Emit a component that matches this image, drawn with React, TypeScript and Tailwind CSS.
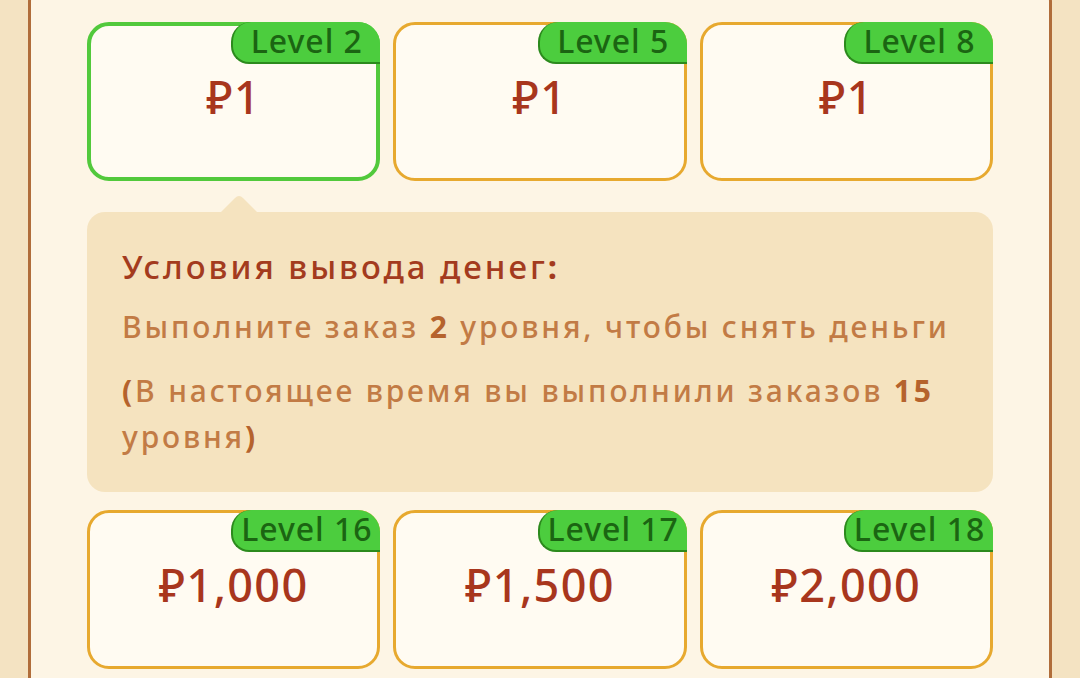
import React from "react";

type Tier = { level: number; amount: string; active?: boolean };

const topRow: Tier[] = [
  { level: 2, amount: "₽1", active: true },
  { level: 5, amount: "₽1" },
  { level: 8, amount: "₽1" },
];

const bottomRow: Tier[] = [
  { level: 16, amount: "₽1,000" },
  { level: 17, amount: "₽1,500" },
  { level: 18, amount: "₽2,000" },
];

const font = { fontFamily: "'Noto Sans', 'Liberation Sans', sans-serif" };

function TierCard({ tier }: { tier: Tier }) {
  return (
    <div
      className={
        "relative h-[159px] rounded-[22px] bg-[#fffbf2] flex items-center justify-center " +
        (tier.active ? "border-[4px] border-[#52c93c]" : "border-[3px] border-[#e7a92f]")
      }
    >
      <div
        className={
          "absolute w-[149px] h-[42px] flex items-center justify-center bg-[#4ccd3e] border-l-2 border-b-2 border-[#2c8a1d] rounded-tl-[20px] rounded-bl-[18px] rounded-tr-[22px] " +
          (tier.active ? "right-[-4px] top-[-4px]" : "right-[-3px] top-[-3px]")
        }
      >
        <span className="text-[32px] font-medium leading-none text-[#1b6512] tracking-[0.03em] pb-[2px]" style={font}>
          Level {tier.level}
        </span>
      </div>
      <span className="text-[45px] font-medium leading-none text-[#a8361d] tracking-[0.03em] mt-[-10px]" style={font}>
        {tier.amount}
      </span>
    </div>
  );
}

export default function App() {
  return (
    <div className="w-[1080px] h-[678px] overflow-hidden bg-[#f4e3c2]" style={font}>
      <div className="mx-[28px] mt-[-22px] h-[730px] bg-[#fdf5e5] border-x-[3px] border-t-[3px] border-[#b06d3a] rounded-t-[24px] px-[56px] pt-[41px]">
        <div className="grid grid-cols-3 gap-x-[13px]">
          {topRow.map((t) => (
            <TierCard key={t.level} tier={t} />
          ))}
        </div>

        <div className="relative mt-[31px] h-[280px] rounded-[18px] bg-[#f5e3bf] pl-[35px] pr-[40px] pt-[32px]">
          <svg
            className="absolute left-[133px] top-[-17px]"
            width="38"
            height="18"
            viewBox="0 0 38 18"
          >
            <path d="M0 18 L15 3 Q19 -1 23 3 L38 18 Z" fill="#f5e3bf" />
          </svg>
          <div className="text-[33px] font-medium leading-[46px] text-[#a33b1e] tracking-[0.09em]">
            Условия вывода денег<span className="font-bold">:</span>
          </div>
          <div className="mt-[14px] text-[30px] font-medium leading-[46px] text-[#c27b45] tracking-[0.095em]">
            Выполните заказ <span className="font-bold text-[#b5632d]">2</span> уровня, чтобы снять деньги
          </div>
          <div className="mt-[18px] text-[30px] font-medium leading-[46px] text-[#c27b45] tracking-[0.095em]">
            <span className="font-bold text-[#b5632d]">(</span>В настоящее время вы выполнили заказов{" "}
            <span className="font-bold text-[#b5632d]">15</span> уровня
            <span className="font-bold text-[#b5632d]">)</span>
          </div>
        </div>

        <div className="mt-[18px] grid grid-cols-3 gap-x-[13px]">
          {bottomRow.map((t) => (
            <TierCard key={t.level} tier={t} />
          ))}
        </div>
      </div>
    </div>
  );
}
